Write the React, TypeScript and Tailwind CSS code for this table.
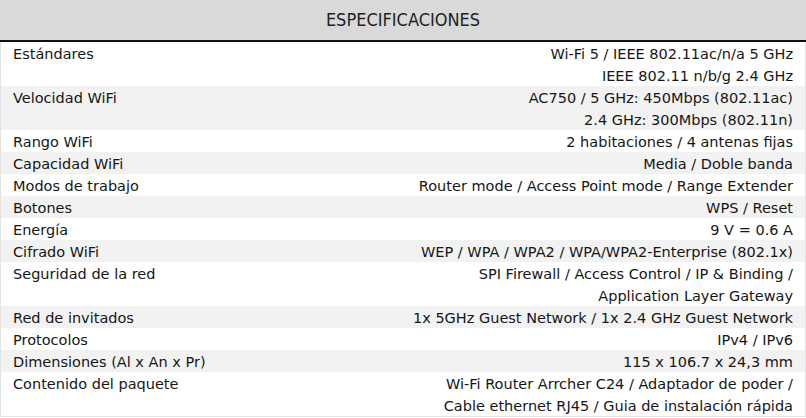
const specs: { label: string; value: string[] }[] = [
  { label: 'Estándares', value: ['Wi-Fi 5 / IEEE 802.11ac/n/a 5 GHz', 'IEEE 802.11 n/b/g 2.4 GHz'] },
  { label: 'Velocidad WiFi', value: ['AC750 / 5 GHz: 450Mbps (802.11ac)', '2.4 GHz: 300Mbps (802.11n)'] },
  { label: 'Rango WiFi', value: ['2 habitaciones / 4 antenas fijas'] },
  { label: 'Capacidad WiFi', value: ['Media / Doble banda'] },
  { label: 'Modos de trabajo', value: ['Router mode / Access Point mode / Range Extender'] },
  { label: 'Botones', value: ['WPS / Reset'] },
  { label: 'Energía', value: ['9 V = 0.6 A'] },
  { label: 'Cifrado WiFi', value: ['WEP / WPA / WPA2 / WPA/WPA2-Enterprise (802.1x)'] },
  { label: 'Seguridad de la red', value: ['SPI Firewall / Access Control / IP & Binding /', 'Application Layer Gateway'] },
  { label: 'Red de invitados', value: ['1x 5GHz Guest Network / 1x 2.4 GHz Guest Network'] },
  { label: 'Protocolos', value: ['IPv4 / IPv6'] },
  { label: 'Dimensiones (Al x An x Pr)', value: ['115 x 106.7 x 24,3 mm'] },
  { label: 'Contenido del paquete', value: ['Wi-Fi Router Arrcher C24 / Adaptador de poder /', 'Cable ethernet RJ45 / Guia de instalación rápida'] },
]

export default function App() {
  return (
    <div className="w-[806px] h-[418px] bg-white overflow-hidden">
      <div className="h-[42px] bg-[#d9d9d9] flex items-center justify-center border-b-2 border-[#111]">
        <span className="text-[18px] leading-[22px] text-[#222] font-['Liberation_Sans_Narrow','DejaVu_Sans_Condensed',sans-serif]">
          ESPECIFICACIONES
        </span>
      </div>
      <div className="border-x border-b border-[#e3e3e3] font-['DejaVu_Sans',sans-serif] text-[14.5px] text-[#161616]">
        {specs.map((s, i) => (
          <div key={s.label} className={`flex justify-between px-3 ${i % 2 ? 'bg-[#f2f2f2]' : 'bg-white'}`}>
            <div className="h-[22px] leading-[24px]">{s.label}</div>
            <div className="text-right">
              {s.value.map(v => (
                <div key={v} className="h-[22px] leading-[24px]">{v}</div>
              ))}
            </div>
          </div>
        ))}
      </div>
    </div>
  )
}
